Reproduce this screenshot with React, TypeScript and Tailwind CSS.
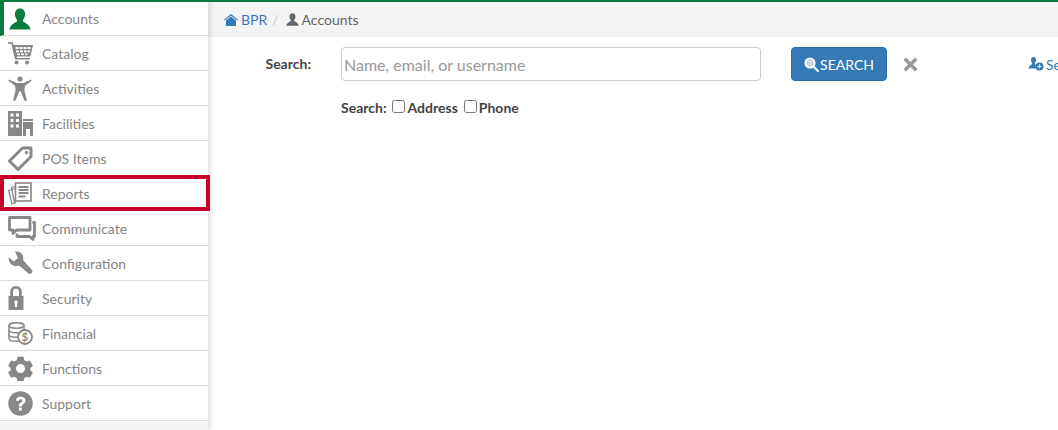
import React from "react";

const G = "#888888";

const UserIcon = ({ c = G, s = 22 }: { c?: string; s?: number }) => (
  <svg width={s} height={s} viewBox="0 0 24 24" fill={c}>
    <path d="M12 .5C8.200.5 6.500 3.400 6.500 6.600c0 2.500.8 4.700 2.200 6.100.4.9.2 1.900-.5 2.400C6 16.500 1.500 18 .5 23.500h23c-1-5.500-5.500-7-7.700-8.400-.7-.5-.9-1.500-.5-2.400 1.400-1.400 2.200-3.600 2.200-6.100C17.500 3.400 15.800.5 12 .5z" />
  </svg>
);

const CartIcon = () => (
  <svg width="26" height="24" viewBox="0 0 26 24" fill={G}>
    <path d="M0 1h4.500l1 3H25l-2.500 11.500H8.500L9 17h13v1.500H7.200L6 14.500 3.300 2.700H0z" />
    <g fill="#fff">
      <rect x="7.500" y="6" width="3" height="2" /><rect x="11.500" y="6" width="3" height="2" /><rect x="15.500" y="6" width="3" height="2" /><rect x="19.500" y="6" width="3" height="2" />
      <rect x="8" y="9.300" width="3" height="2" /><rect x="12" y="9.300" width="3" height="2" /><rect x="16" y="9.300" width="2.500" height="2" /><rect x="19.500" y="9.300" width="2.500" height="2" />
      <rect x="9" y="12.500" width="3" height="1.600" /><rect x="13" y="12.500" width="3" height="1.600" /><rect x="17" y="12.500" width="2.500" height="1.600" />
    </g>
    <circle cx="8.500" cy="21.500" r="2" /><circle cx="19" cy="21.500" r="2" />
  </svg>
);

const PersonIcon = () => (
  <svg width="24" height="25" viewBox="0 0 24 25" fill={G}>
    <circle cx="12" cy="3" r="2.600" />
    <path d="M1 3.500l7.500 3.500h7L23 3.500l.6 1.300-6.600 5.200-.6 4.500 2.600 10.200h-2.600L12.800 15.500h-1.600L7.600 24.500H5l2.600-10.200-.6-4.500L.4 4.800z" />
  </svg>
);

const BuildingIcon = () => (
  <svg width="25" height="25" viewBox="0 0 25 25" fill={G}>
    <path d="M0 0h14v25H0z" />
    <path d="M15 8h10v2H15zM15 11h10v14h-3v-7h-4v7h-3z" />
    <g fill="#fff">
      <rect x="2.500" y="2.500" width="3" height="3" /><rect x="8" y="2.500" width="3" height="3" />
      <rect x="2.500" y="8" width="3" height="3" /><rect x="8" y="8" width="3" height="3" />
      <rect x="2.500" y="13.500" width="3" height="3" /><rect x="8" y="13.500" width="3" height="3" />
    </g>
  </svg>
);

const TagIcon = () => (
  <svg width="25" height="25" viewBox="0 0 25 25" fill="none" stroke={G} strokeWidth="3" strokeLinejoin="round">
    <path d="M14.500 2H23v8.500L10 23.500 1.500 15z" />
    <circle cx="18.500" cy="6.500" r="1.700" fill={G} stroke="none" />
  </svg>
);

const ReportsIcon = () => (
  <svg width="24" height="23" viewBox="0 0 24 23" fill="none" stroke={G} strokeWidth="1.300">
    <path d="M7 4.500L3.500 5.500l3 15 1.500-.5" />
    <path d="M7 6.500L.7 8.500 4 21.800l4-1.300" />
    <rect x="7.500" y="1" width="15.500" height="18" fill="#fff" strokeWidth="1.600" />
    <path d="M10.500 5h10M10.500 8h10M10.500 11h10M10.500 14.500h7" strokeWidth="1.800" />
  </svg>
);

const ChatIcon = () => (
  <svg width="28" height="25" viewBox="0 0 28 25" fill="none" stroke={G} strokeWidth="2.800" strokeLinejoin="round">
    <path d="M1.500 1.500H22V14H8.500L5 17.500V14H1.500z" />
    <path d="M24.500 6.500h2v14h-1.500v3l-3.500-3H9V17.500" />
  </svg>
);

const WrenchIcon = () => (
  <svg width="25" height="25" viewBox="0 0 25 25" fill={G}>
    <path d="M9 .5C13 .5 16 4 15 9l9 10c1.500 2-1.500 5-3.500 3.500L11 14.500C6 16.500 1 13 .7 8V6.500L6 10.500 10 7 7 .7z" />
  </svg>
);

const LockIcon = () => (
  <svg width="16" height="24" viewBox="0 0 16 24" fill={G}>
    <path d="M8 0C4 0 2.200 3 2.200 6v4H0.500v14h15V10h-1.700V6C13.800 3 12 0 8 0zm0 2.600c2 0 3 1.600 3 3.700V10H5V6.300C5 4.200 6 2.600 8 2.600z" />
    <path d="M8 14.500a1.800 1.800 0 0 0-1 3.300V21h2v-3.200a1.800 1.800 0 0 0-1-3.300z" fill="#fff" />
  </svg>
);

const CoinsIcon = () => (
  <svg width="25" height="23" viewBox="0 0 25 23" fill="none" stroke={G} strokeWidth="1.500">
    <ellipse cx="8.500" cy="3.500" rx="7.500" ry="2.800" fill="none" />
    <path d="M1 3.500v13c0 1.500 3 2.800 7.500 2.800h2" />
    <path d="M1 8c0 1.500 3 2.800 7.500 2.800 1.500 0 3-.1 4.500-.6M1 12.400c0 1.500 3 2.800 7.500 2.800h1.500M16 3.500v5" />
    <circle cx="17" cy="15" r="7" fill="#fff" strokeWidth="1.800" />
    <text x="17" y="19" textAnchor="middle" fontSize="11" fontWeight="700" fill={G} stroke="none" fontFamily="Lato, sans-serif">$</text>
  </svg>
);

const GearIcon = () => (
  <svg width="25" height="25" viewBox="0 0 25 25" fill={G}>
    <path fillRule="evenodd" d="M9.500.8h6l.8 3.400 2.300 1.300 3.300-1 3 5.200-2.500 2.300v2.200l2.500 2.300-3 5.200-3.300-1-2.300 1.300-.8 3.400h-6l-.8-3.400-2.300-1.300-3.300 1-3-5.200 2.500-2.300v-2.200L.1 9.700l3-5.200 3.300 1 2.300-1.300zM12.500 8a4.500 4.500 0 1 0 0 9 4.500 4.500 0 0 0 0-9z" />
  </svg>
);

const HelpIcon = () => (
  <svg width="25" height="25" viewBox="0 0 25 25">
    <circle cx="12.500" cy="12.500" r="12.200" fill={G} />
    <path d="M8 9.800C8 7 10 5.700 12.700 5.700c2.800 0 4.800 1.500 4.800 3.900 0 1.900-1.100 2.800-2.300 3.600-1 .7-1.400 1.100-1.400 2.200h-3c0-2 .7-3 2-3.900.9-.6 1.500-1 1.500-1.800 0-.9-.7-1.400-1.700-1.400-1.100 0-1.800.7-1.800 1.800z" fill="#fff" />
    <rect x="10.800" y="16.600" width="3" height="3" fill="#fff" />
  </svg>
);

const HomeIcon = () => (
  <svg width="14" height="12" viewBox="0 0 14 12" fill="#337ab7">
    <path d="M7 0L0 5.800l.7.7L7 1.500l6.300 5 .7-.7z" />
    <path d="M2 6.500L7 2.500l5 4V12H2z" />
  </svg>
);

const SearchGlyph = () => (
  <svg width="15" height="15" viewBox="0 0 15 15">
    <circle cx="6" cy="6" r="4.700" fill="#c5d9ea" stroke="#fff" strokeWidth="1.700" />
    <path d="M9.500 9.500L14 14" stroke="#fff" strokeWidth="2.200" strokeLinecap="round" />
  </svg>
);

const XGlyph = () => (
  <svg width="15" height="15" viewBox="0 0 15 15" fill="#999999">
    <path d="M3 .5L7.500 5 12 .5 14.500 3 10 7.500l4.500 4.500-2.500 2.500L7.500 10 3 14.500.5 12 5 7.500.5 3z" />
  </svg>
);

const AddUserIcon = () => (
  <svg width="16" height="14" viewBox="0 0 16 14">
    <path d="M5.500 0C3.800 0 3 1.400 3 3c0 1.300.4 2.500 1.100 3.200.2.500 0 1-.3 1.300C2.700 8.200 1 8.800.500 11.500H8.500C8.200 8.800 7.700 8.200 7.200 7.500c-.3-.3-.5-.8-.3-1.300C7.600 5.500 8 4.300 8 3 8 1.400 7.200 0 5.500 0z" fill="#337ab7" />
    <circle cx="11.500" cy="9.500" r="4" fill="#337ab7" />
    <path d="M9.500 9.500h4M11.500 7.500v4" stroke="#fff" strokeWidth="1.100" />
  </svg>
);

const items: { label: string; icon: React.ReactNode }[] = [
  { label: "Accounts", icon: <UserIcon c="#0b7a3e" /> },
  { label: "Catalog", icon: <CartIcon /> },
  { label: "Activities", icon: <PersonIcon /> },
  { label: "Facilities", icon: <BuildingIcon /> },
  { label: "POS Items", icon: <TagIcon /> },
  { label: "Reports", icon: <ReportsIcon /> },
  { label: "Communicate", icon: <ChatIcon /> },
  { label: "Configuration", icon: <WrenchIcon /> },
  { label: "Security", icon: <LockIcon /> },
  { label: "Financial", icon: <CoinsIcon /> },
  { label: "Functions", icon: <GearIcon /> },
  { label: "Support", icon: <HelpIcon /> },
];

export default function App() {
  return (
    <div className="w-[1058px] h-[430px] overflow-hidden flex flex-col border-t-2 border-[#0b7a3e] bg-white font-['Lato',sans-serif] text-[14px] text-[#333333]">
      <div className="flex flex-1 min-h-0">
        <aside className="w-[208px] shrink-0 flex flex-col bg-[#f5f5f5] shadow-[2px_0_6px_rgba(0,0,0,0.14)] z-10">
          {items.map((it, i) => (
            <div
              key={it.label}
              className={`relative shrink-0 flex items-center bg-white border-b border-[#dddddd] ${i === 0 ? "h-[34px] border-l-4 border-l-[#0b7a3e] pl-[5px]" : "h-[35px] pl-[8px]"}`}
            >
              <span className={`shrink-0 flex items-center ${i === 0 ? "w-[33px]" : "w-[34px]"}`}>{it.icon}</span>
              <span className="text-[#858585]">{it.label}</span>
              {it.label === "Reports" && (
                <span className="absolute left-0 right-[-2px] top-[-1px] bottom-[-1px] border-[4px] border-[#c8002a]" />
              )}
            </div>
          ))}
        </aside>
        <main className="flex-1 min-w-0 flex flex-col">
          <nav className="h-[35px] shrink-0 bg-[#f4f4f4] flex items-center pl-[16px]">
            <HomeIcon />
            <span className="ml-[3px] text-[#337ab7]">BPR</span>
            <span className="ml-[5px] text-[#cccccc]">/</span>
            <span className="ml-[7px]"><UserIcon c="#666666" s={13} /></span>
            <span className="ml-[3px] text-[#666666]">Accounts</span>
          </nav>
          <section className="flex items-start mt-[10px] whitespace-nowrap">
            <label className="w-[103px] shrink-0 text-right font-bold text-[14px] leading-[34px] text-[#444444]">Search:</label>
            <div className="ml-[30px] shrink-0 w-[420px]">
              <input
                readOnly
                placeholder="Name, email, or username"
                className="w-full h-[34px] rounded-[4px] border border-[#cccccc] px-[2px] text-[16px] placeholder:text-[#999999] outline-none bg-white"
              />
              <div className="flex items-center mt-[16px] h-[20px] font-bold text-[#444444]">
                <span>Search:</span>
                <input type="checkbox" readOnly className="ml-[5px] w-[13px] h-[13px] -translate-y-px" />
                <span className="ml-[3px]">Address</span>
                <input type="checkbox" readOnly className="ml-[6px] w-[13px] h-[13px] -translate-y-px" />
                <span className="ml-[2px]">Phone</span>
              </div>
            </div>
            <button className="ml-[30px] shrink-0 w-[96px] h-[34px] rounded-[4px] bg-[#337ab7] border border-[#2e6da4] text-white flex items-center justify-center gap-[1px]">
              <SearchGlyph />
              <span>SEARCH</span>
            </button>
            <span className="ml-[16px] h-[34px] flex items-center"><XGlyph /></span>
            <span className="ml-[110px] h-[34px] flex items-center gap-[2px] text-[#337ab7]">
              <AddUserIcon />
              <span>Select</span>
            </span>
          </section>
        </main>
      </div>
    </div>
  );
}
